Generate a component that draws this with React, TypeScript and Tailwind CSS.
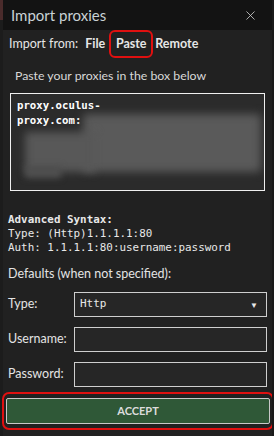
import { X } from "lucide-react";

const ui = { fontFamily: 'Lato, "Noto Sans", sans-serif' };
const mono = { fontFamily: '"DejaVu Sans Mono", "Liberation Mono", monospace' };

const Field = ({ label, children }: { label: string; children?: React.ReactNode }) => (
  <div className="flex items-center h-[25px]">
    <span className="w-[66px] shrink-0 text-[12.5px] text-[#e4e4e4]">{label}</span>
    <div className="flex-1 h-full border border-[#cfcfcf] bg-[#262626] flex items-center px-[5px]">
      {children}
    </div>
  </div>
);

export default function App() {
  return (
    <div className="w-[274px] h-[436px] bg-[#1a1a1a] flex overflow-hidden" style={ui}>
      <div className="w-[3px] flex flex-col">
        <div className="h-[20px] bg-[#4a2b2b]" />
        <div className="flex-1 bg-[#1c1c1c]" />
      </div>
      <div className="w-[269px] flex flex-col bg-[#212121]">
        <div className="h-[30px] shrink-0 bg-[#131313] flex items-center justify-between pl-[8px] pr-[14px]">
          <span className="text-[15px] text-[#c9d2d6]">Import proxies</span>
          <X size={15} strokeWidth={1.3} className="text-[#d0d0d0]" />
        </div>

        <div className="h-[28px] shrink-0 flex items-center pl-[6px] text-[12.5px] text-[#e6e6e6]">
          <span className="mr-[7px]">Import from:</span>
          <span className="font-bold mr-[4px]">File</span>
          <span className="font-bold h-[28px] w-[44px] border-2 border-[#e01010] rounded-[6px] flex items-center justify-center">
            Paste
          </span>
          <span className="font-bold ml-[2px]">Remote</span>
        </div>

        <div className="flex flex-col px-[5px] pt-[10px] flex-1">
          <span className="text-[12.3px] leading-[16px] text-[#d8d8d8] pl-[7px]">Paste your proxies in the box below</span>
          <div className="mt-[9px] mx-[2px] h-[98px] shrink-0 border border-[#f0f0f0] bg-[#2b2b2b] relative overflow-hidden">
            <div className="pl-[6px] pt-[4px] text-[10.7px] leading-[15px] text-white font-bold" style={mono}>
              <div>proxy.oculus-</div>
              <div>proxy.com:</div>
            </div>
            <div className="absolute left-[72px] top-[20px] w-[178px] h-[58px] bg-[#5a5a5a] blur-[4px] rounded-sm" />
            <div className="absolute left-[14px] top-[38px] w-[70px] h-[40px] bg-[#585858] blur-[4px]" />
            <div className="absolute left-[14px] top-[72px] w-[36px] h-[12px] bg-[#4f4f4f] blur-[3px]" />
          </div>

          <div className="mt-[22px] text-[10.9px] leading-[14px] text-[#e8e8e8]" style={mono}>
            <div className="font-bold">Advanced Syntax:</div>
            <div>Type: (Http)1.1.1.1:80</div>
            <div>Auth: 1.1.1.1:80:username:password</div>
          </div>

          <span className="mt-[11px] text-[12.5px] leading-[16px] text-[#e4e4e4]">Defaults (when not specified):</span>

          <div className="mt-[10px] flex flex-col gap-[10px]">
            <Field label="Type:">
              <span className="flex-1 text-[11px] text-[#e8e8e8]" style={mono}>Http</span>
              <span className="text-[8px] text-[#e8e8e8] mr-[3px]">▼</span>
            </Field>
            <Field label="Username:" />
            <Field label="Password:" />
          </div>

          <div className="mt-[5px] -ml-[6px] -mr-[7px] border-2 border-[#e01010] rounded-[7px] px-[2px] py-[4px]">
            <div className="h-[26px] bg-[#2f5837] border border-[#c8c8c8] rounded-[2px] flex items-center justify-center text-[11px] font-bold text-[#dcdcdc]">
              ACCEPT
            </div>
          </div>
        </div>
      </div>
      <div className="w-[2px] bg-[#1a1a1a]" />
    </div>
  );
}
